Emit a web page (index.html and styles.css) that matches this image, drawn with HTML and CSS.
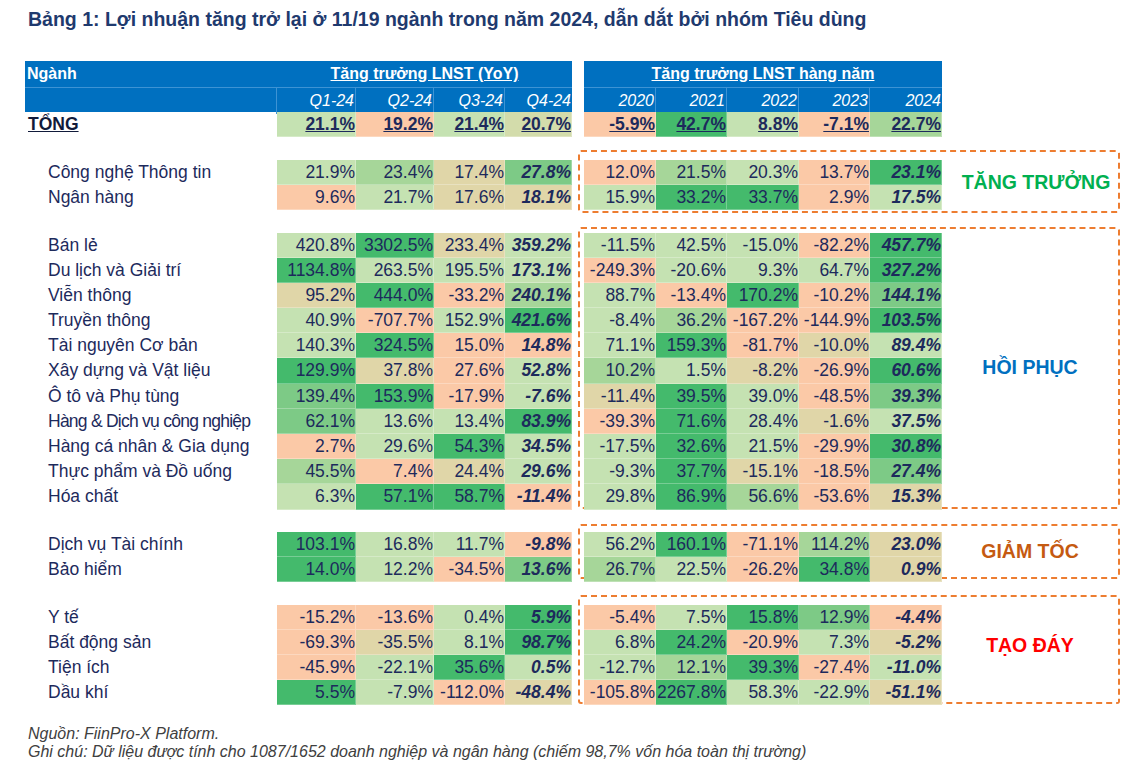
FILE: index.html
```html
<!DOCTYPE html>
<html lang="vi">
<head>
<meta charset="utf-8">
<title>Bảng 1</title>
<link rel="stylesheet" href="styles.css">
</head>
<body>
<div class="page">
  <h1 class="title">Bảng 1: Lợi nhuận tăng trở lại ở 11/19 ngành trong năm 2024, dẫn dắt bởi nhóm Tiêu dùng</h1>

  <div class="head">
    <div class="hl">
      <div class="hrow1 lcols">
        <div class="hname">Ngành</div>
        <div class="htitle span4"><u>Tăng trưởng LNST (YoY)</u></div>
      </div>
      <div class="hrow2 lcols">
        <div class="hname"></div>
        <div class="hc">Q1-24</div><div class="hc">Q2-24</div><div class="hc">Q3-24</div><div class="hc">Q4-24</div>
      </div>
    </div>
    <div class="hr">
      <div class="hrow1 htitle"><u>Tăng trưởng LNST hàng năm</u></div>
      <div class="hrow2 rcols">
        <div class="hc">2020</div><div class="hc">2021</div><div class="hc">2022</div><div class="hc">2023</div><div class="hc">2024</div>
      </div>
    </div>
  </div>

  <div class="total">
    <div class="lcols">
      <div class="tlab">TỔNG</div>
      <div class="c g1">21.1%</div><div class="c p">19.2%</div><div class="c g1">21.4%</div><div class="c gt">20.7%</div>
    </div>
    <div class="rcols">
      <div class="c p">-5.9%</div><div class="c g4">42.7%</div><div class="c g1">8.8%</div><div class="c p">-7.1%</div><div class="c g2">22.7%</div>
    </div>
  </div>

  <section class="grp grp1">
    <div class="lcols rows">
      <div class="lab">Công nghệ Thông tin</div><div class="c g1">21.9%</div><div class="c g2">23.4%</div><div class="c t">17.4%</div><div class="c b g3">27.8%</div>
      <div class="lab">Ngân hàng</div><div class="c p">9.6%</div><div class="c g1">21.7%</div><div class="c t">17.6%</div><div class="c b t">18.1%</div>
    </div>
    <div class="box">
      <div class="rcols">
        <div class="c p">12.0%</div><div class="c g2">21.5%</div><div class="c g1">20.3%</div><div class="c p">13.7%</div><div class="c b g4">23.1%</div>
        <div class="c g1">15.9%</div><div class="c g4">33.2%</div><div class="c g4">33.7%</div><div class="c p">2.9%</div><div class="c b g1">17.5%</div>
      </div>
      <div class="tag green">TĂNG TRƯỞNG</div>
    </div>
  </section>

  <section class="grp grp2">
    <div class="lcols rows">
      <div class="lab">Bán lẻ</div><div class="c g1">420.8%</div><div class="c g4">3302.5%</div><div class="c t">233.4%</div><div class="c b g1">359.2%</div>
      <div class="lab">Du lịch và Giải trí</div><div class="c g4">1134.8%</div><div class="c g1">263.5%</div><div class="c g1">195.5%</div><div class="c b g1">173.1%</div>
      <div class="lab">Viễn thông</div><div class="c t">95.2%</div><div class="c g4">444.0%</div><div class="c p">-33.2%</div><div class="c b g2">240.1%</div>
      <div class="lab">Truyền thông</div><div class="c g1">40.9%</div><div class="c p">-707.7%</div><div class="c g1">152.9%</div><div class="c b g4">421.6%</div>
      <div class="lab">Tài nguyên Cơ bản</div><div class="c g1">140.3%</div><div class="c g4">324.5%</div><div class="c p">15.0%</div><div class="c b p">14.8%</div>
      <div class="lab">Xây dựng và Vật liệu</div><div class="c g4">129.9%</div><div class="c t">37.8%</div><div class="c p">27.6%</div><div class="c b g1">52.8%</div>
      <div class="lab">Ô tô và Phụ tùng</div><div class="c g3">139.4%</div><div class="c g4">153.9%</div><div class="c p">-17.9%</div><div class="c b g1">-7.6%</div>
      <div class="lab tight">Hàng &amp; Dịch vụ công nghiệp</div><div class="c g3">62.1%</div><div class="c g1">13.6%</div><div class="c g1">13.4%</div><div class="c b g4">83.9%</div>
      <div class="lab">Hàng cá nhân &amp; Gia dụng</div><div class="c p">2.7%</div><div class="c g1">29.6%</div><div class="c g4">54.3%</div><div class="c b g1">34.5%</div>
      <div class="lab">Thực phẩm và Đồ uống</div><div class="c g2">45.5%</div><div class="c p">7.4%</div><div class="c t">24.4%</div><div class="c b g1">29.6%</div>
      <div class="lab">Hóa chất</div><div class="c g1">6.3%</div><div class="c g4">57.1%</div><div class="c g4">58.7%</div><div class="c b p">-11.4%</div>
    </div>
    <div class="box">
      <div class="rcols">
        <div class="c g1">-11.5%</div><div class="c g1">42.5%</div><div class="c g1">-15.0%</div><div class="c p">-82.2%</div><div class="c b g4">457.7%</div>
        <div class="c p">-249.3%</div><div class="c g1">-20.6%</div><div class="c g1">9.3%</div><div class="c g1">64.7%</div><div class="c b g4">327.2%</div>
        <div class="c g1">88.7%</div><div class="c p">-13.4%</div><div class="c g4">170.2%</div><div class="c p">-10.2%</div><div class="c b g3">144.1%</div>
        <div class="c g1">-8.4%</div><div class="c g2">36.2%</div><div class="c p">-167.2%</div><div class="c p">-144.9%</div><div class="c b g4">103.5%</div>
        <div class="c g1">71.1%</div><div class="c g4">159.3%</div><div class="c p">-81.7%</div><div class="c t">-10.0%</div><div class="c b g1">89.4%</div>
        <div class="c g2">10.2%</div><div class="c g1">1.5%</div><div class="c t">-8.2%</div><div class="c p">-26.9%</div><div class="c b g4">60.6%</div>
        <div class="c t">-11.4%</div><div class="c g4">39.5%</div><div class="c g1">39.0%</div><div class="c p">-48.5%</div><div class="c b g3">39.3%</div>
        <div class="c p">-39.3%</div><div class="c g4">71.6%</div><div class="c g1">28.4%</div><div class="c t">-1.6%</div><div class="c b g1">37.5%</div>
        <div class="c g1">-17.5%</div><div class="c g4">32.6%</div><div class="c g1">21.5%</div><div class="c p">-29.9%</div><div class="c b g4">30.8%</div>
        <div class="c g1">-9.3%</div><div class="c g4">37.7%</div><div class="c t">-15.1%</div><div class="c p">-18.5%</div><div class="c b g3">27.4%</div>
        <div class="c g1">29.8%</div><div class="c g4">86.9%</div><div class="c g2">56.6%</div><div class="c p">-53.6%</div><div class="c b t">15.3%</div>
      </div>
      <div class="tag blue">HỒI PHỤC</div>
    </div>
  </section>

  <section class="grp grp3">
    <div class="lcols rows">
      <div class="lab">Dịch vụ Tài chính</div><div class="c g4">103.1%</div><div class="c g1">16.8%</div><div class="c g1">11.7%</div><div class="c b p">-9.8%</div>
      <div class="lab">Bảo hiểm</div><div class="c g4">14.0%</div><div class="c g1">12.2%</div><div class="c p">-34.5%</div><div class="c b g3">13.6%</div>
    </div>
    <div class="box">
      <div class="rcols">
        <div class="c g1">56.2%</div><div class="c g4">160.1%</div><div class="c p">-71.1%</div><div class="c g2">114.2%</div><div class="c b t">23.0%</div>
        <div class="c g2">26.7%</div><div class="c g1">22.5%</div><div class="c p">-26.2%</div><div class="c g4">34.8%</div><div class="c b t">0.9%</div>
      </div>
      <div class="tag orange">GIẢM TỐC</div>
    </div>
  </section>

  <section class="grp grp4">
    <div class="lcols rows">
      <div class="lab">Y tế</div><div class="c p">-15.2%</div><div class="c p">-13.6%</div><div class="c g1">0.4%</div><div class="c b g4">5.9%</div>
      <div class="lab">Bất động sản</div><div class="c p">-69.3%</div><div class="c t">-35.5%</div><div class="c g1">8.1%</div><div class="c b g4">98.7%</div>
      <div class="lab">Tiện ích</div><div class="c p">-45.9%</div><div class="c g1">-22.1%</div><div class="c g4">35.6%</div><div class="c b g1">0.5%</div>
      <div class="lab">Dầu khí</div><div class="c g4">5.5%</div><div class="c g1">-7.9%</div><div class="c p">-112.0%</div><div class="c b t">-48.4%</div>
    </div>
    <div class="box">
      <div class="rcols">
        <div class="c p">-5.4%</div><div class="c g1">7.5%</div><div class="c g4">15.8%</div><div class="c g3">12.9%</div><div class="c b p">-4.4%</div>
        <div class="c g1">6.8%</div><div class="c g4">24.2%</div><div class="c p">-20.9%</div><div class="c g1">7.3%</div><div class="c b t">-5.2%</div>
        <div class="c g1">-12.7%</div><div class="c g2">12.1%</div><div class="c g4">39.3%</div><div class="c p">-27.4%</div><div class="c b g1">-11.0%</div>
        <div class="c p">-105.8%</div><div class="c g4">2267.8%</div><div class="c g1">58.3%</div><div class="c g1">-22.9%</div><div class="c b t">-51.1%</div>
      </div>
      <div class="tag red">TẠO ĐÁY</div>
    </div>
  </section>

  <div class="notes">
    <p>Nguồn: FiinPro-X Platform.</p>
    <p>Ghi chú: Dữ liệu được tính cho 1087/1652 doanh nghiệp và ngân hàng (chiếm 98,7% vốn hóa toàn thị trường)</p>
  </div>
</div>
</body>
</html>
```

FILE: styles.css
```css
* { box-sizing: border-box; }

body {
  margin: 0;
  background: #ffffff;
  font-family: "Liberation Sans", Arial, sans-serif;
  color: #1d2a5c;
}

.page {
  padding: 8px 0 0 25px;
  width: 1137px;
}

.title {
  margin: 0 0 0 3px;
  font-size: 19.5px;
  line-height: 22px;
  font-weight: bold;
  color: #1f3a6e;
  white-space: nowrap;
}

/* header */
.head {
  display: flex;
  margin-top: 31px;
  gap: 12px;
  width: 917px;
}

.hl { width: 547px; background: #0070c0; }
.hr { width: 358px; background: #0070c0; }

.lcols {
  display: grid;
  grid-template-columns: 252px 79px 78px 71px 67px;
}

.rcols {
  display: grid;
  grid-template-columns: 72px 71px 72px 71px 72px;
  width: 358px;
}

.hrow1 {
  height: 27px;
  color: #ffffff;
  font-weight: bold;
  font-size: 16px;
  line-height: 26px;
  border-bottom: 1px solid #3d93d4;
}

.hrow2 {
  height: 24px;
  color: #ffffff;
  font-style: italic;
  font-size: 16px;
  line-height: 26px;
}

.hname { padding-left: 2px; }
.hrow2 .hname { border-right: 1px solid #3d93d4; }

.htitle { text-align: center; }
.span4 { grid-column: 2 / 6; }

.hc {
  text-align: right;
  padding-right: 1px;
  border-right: 1px solid #3d93d4;
}
.hc:last-child { border-right: none; }

/* total row */
.total {
  display: flex;
  gap: 12px;
  height: 25px;
  width: 917px;
}
.total .lcols { width: 547px; }
.total .c {
  font-weight: bold;
  text-decoration: underline;
}
.tlab {
  padding-left: 3px;
  font-weight: bold;
  text-decoration: underline;
  font-size: 17.5px;
  line-height: 25px;
  color: #111a3a;
}

/* groups */
.grp {
  display: flex;
  align-items: flex-start;
}

.rows { width: 547px; grid-auto-rows: 25px; }
.box .rcols { grid-auto-rows: 25px; }

.box {
  display: flex;
  width: 542px;
  margin-left: 6px;
  padding-left: 4px;
  border: 2px dashed #ed7d31;
  border-radius: 3px;
}
.box .rcols { align-self: flex-start; }

.grp1 { margin-top: 13px; }
.grp1 .rows { margin-top: 9.5px; }
.grp1 .box { height: 63px; padding-top: 7.5px; }

.grp2 { margin-top: 14px; }
.grp2 .rows { margin-top: 5.5px; grid-auto-rows: 25.2px; }
.grp2 .box { height: 282px; padding-top: 3.5px; }
.grp2 .box .rcols { grid-auto-rows: 25.2px; }

.grp3 { margin-top: 14.5px; }
.grp3 .rows { margin-top: 7.5px; }
.grp3 .box { height: 55px; padding-top: 5.5px; }

.grp4 { margin-top: 13.5px; }
.grp4 .rows { margin-top: 9.5px; }
.grp4 .box { height: 109px; padding-top: 7.5px; }

.lab {
  padding-left: 23px;
  font-size: 17.5px;
  line-height: 25px;
  white-space: nowrap;
}
.lab.tight { letter-spacing: -0.75px; }

.c {
  text-align: right;
  padding-right: 1px;
  font-size: 17.5px;
  line-height: 25px;
  white-space: nowrap;
  box-shadow: inset -1px -1px 0 rgba(255, 255, 255, 0.28);
}
.c.b { font-weight: bold; font-style: italic; }

.tag {
  flex: 1;
  align-self: stretch;
  display: flex;
  align-items: center;
  justify-content: center;
  font-weight: bold;
  font-size: 19.5px;
  margin-top: -4px;
}
.grp1 .tag { margin-top: -5px; padding-left: 12px; }
.grp3 .tag { margin-top: -6px; }
.grp4 .tag { margin-top: -16px; }
.green { color: #00b050; }
.blue { color: #0070c0; }
.orange { color: #c55a11; }
.red { color: #ff0000; }

/* heat colours */
.p  { background: #fbc9a7; }
.t  { background: #e0d6a8; }
.gt { background: #d3dcab; }
.g1 { background: #c5e2b2; }
.g2 { background: #a6d699; }
.g3 { background: #7dca86; }
.g4 { background: #44ba6c; }

/* notes */
.notes {
  margin-top: 20.5px;
  padding-left: 3px;
  font-style: italic;
  font-size: 16px;
  line-height: 18px;
  color: #404040;
}
.notes p { margin: 0; }
```
